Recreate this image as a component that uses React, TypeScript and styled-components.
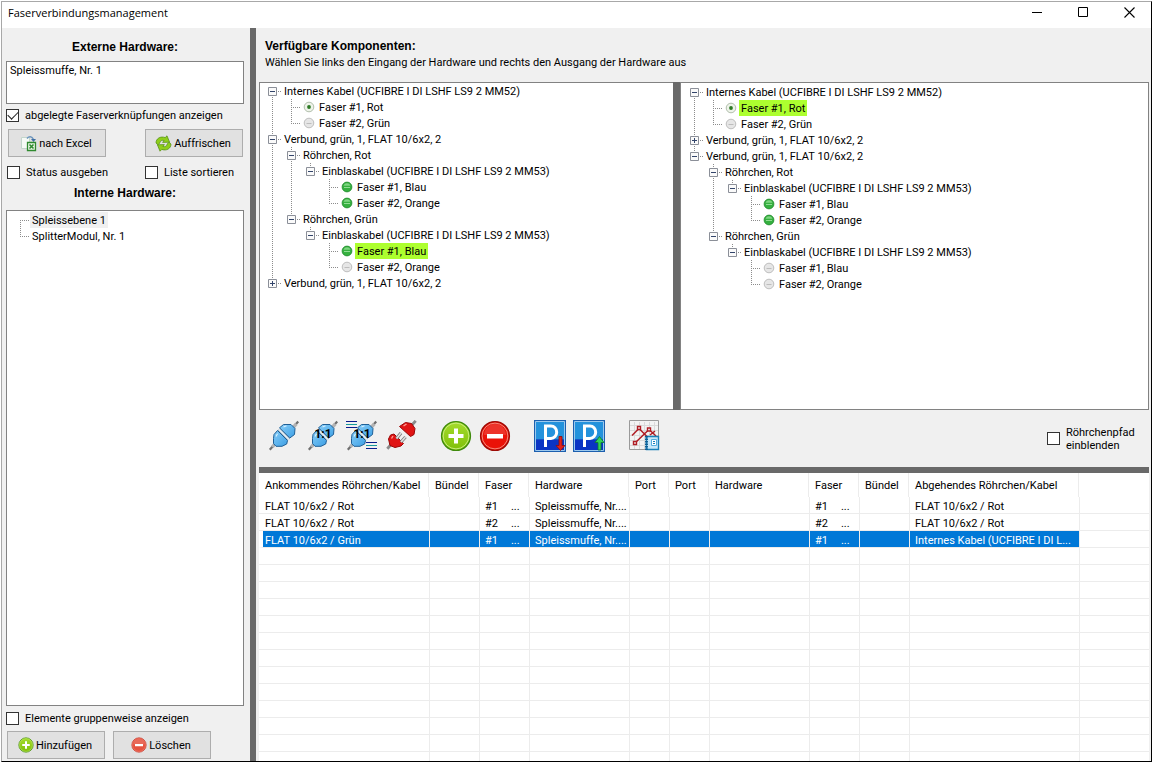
import React, { useState } from 'react';
import styled, { createGlobalStyle, css } from 'styled-components';

const colors = {
  face: '#f0f0f0',
  splitter: '#696969',
  edge: '#828282',
  grid: '#ececec',
  selection: '#0078d7',
  mark: '#adff2f',
};

const GlobalStyle = createGlobalStyle`
  * { box-sizing: border-box; }
  body {
    margin: 0;
    background: #fff;
    color: #000;
    font: 11px/16px Roboto, "Liberation Sans", Arial, sans-serif;
  }
  button { font: inherit; color: inherit; margin: 0; }
`;

const Frame = styled.div`
  height: 100vh;
  padding: 1px 0 1px 1px;
`;

const Window = styled.div`
  height: 100%;
  display: flex;
  flex-direction: column;
  border: 1px solid #a8a8a8;
  border-right-color: #000;
  border-bottom-color: #000;
`;

const TitleBar = styled.header`
  display: flex;
  justify-content: space-between;
  height: 26px;
  padding-left: 6px;
`;

const Title = styled.h1`
  margin: 0;
  font: 11px/22px "Open Sans", "Noto Sans", sans-serif;
`;

const WindowButtons = styled.div`
  display: flex;
  height: 20px;
`;

const WindowButton = styled.button`
  width: 46px;
  padding: 0 0 0 2px;
  border: 0;
  background: none;
  display: flex;
  align-items: center;
  justify-content: center;
`;

const Body = styled.div`
  flex: 1;
  min-height: 0;
  display: flex;
  background: ${colors.face};
`;

const Sidebar = styled.aside`
  width: 248px;
  flex: none;
  display: flex;
  flex-direction: column;
  padding: 11px 6px 2px 4px;
`;

const VerticalSplitter = styled.div`
  width: 6px;
  flex: none;
  background: ${colors.splitter};
`;

const HorizontalSplitter = styled.div`
  height: 6px;
  flex: none;
  background: ${colors.splitter};
`;

const SectionTitle = styled.h2`
  margin: 0;
  font: bold 12px/16px "Liberation Sans", Arial, sans-serif;
`;

const SideTitle = styled(SectionTitle)`
  text-align: center;
`;

const HardwareBox = styled.textarea`
  display: block;
  height: 43px;
  margin: 6px 0 4px;
  padding: 1px 3px;
  border: 1px solid ${colors.edge};
  border-radius: 0;
  background: #fff;
  color: #000;
  font: inherit;
  resize: none;
  outline: none;
  overflow: hidden;
`;

const CheckLabel = styled.label<{ $wrap?: boolean }>`
  display: flex;
  align-items: center;
  gap: 6px;
  min-height: 14px;
  line-height: 13px;
  white-space: ${(p) => (p.$wrap ? 'normal' : 'nowrap')};
`;

const CheckInput = styled.input`
  appearance: none;
  flex: none;
  width: 13px;
  height: 13px;
  margin: 0;
  border: 1px solid #333;
  background: #fff;
  display: grid;
  place-items: center;
  &:checked::before {
    content: '';
    width: 9px;
    height: 5px;
    border: solid #222;
    border-width: 0 0 1px 1px;
    transform: translateY(-1px) rotate(-45deg);
  }
`;

const TwoColumns = styled.div`
  display: grid;
  grid-template-columns: 98px 98px;
  justify-content: space-between;
`;

const PairedButtons = styled(TwoColumns)`
  margin: 7px 0 8px;
  padding: 0 1px 0 2px;
`;

const PairedChecks = styled(TwoColumns)`
  margin-bottom: 6px;
  padding: 0 1px;
`;

const BottomButtons = styled.div`
  display: flex;
  gap: 8px;
  margin-top: 6px;
  padding-left: 1px;
`;

const PushButton = styled.button`
  width: 98px;
  height: 28px;
  padding: 0 2px 0 0;
  border: 1px solid #adadad;
  background: #e1e1e1;
  display: flex;
  align-items: center;
  justify-content: center;
  gap: 2px;
  white-space: nowrap;
`;

const ButtonText = styled.span`
  padding-top: 2px;
`;

const InnerTree = styled.div`
  flex: 1;
  min-height: 0;
  margin: 9px 0 5px;
  padding: 1px 4px;
  border: 1px solid ${colors.edge};
  background: #fff;
  overflow: hidden;
`;

const Main = styled.main`
  flex: 1;
  min-width: 0;
  display: flex;
  flex-direction: column;
  padding: 0 2px 0 3px;
`;

const Intro = styled.div`
  padding: 10px 6px 12px;
`;

const IntroText = styled.p`
  margin: 0;
  padding-top: 1px;
  line-height: 15px;
`;

const Trees = styled.div`
  flex: 328 1 0;
  min-height: 0;
  display: grid;
  grid-template-columns: minmax(0, 414fr) 7px minmax(0, 469fr);
`;

const TreeSplitter = styled.div`
  background: ${colors.splitter};
`;

const TreePane = styled.div<{ $side: 'input' | 'output' }>`
  padding: ${(p) => (p.$side === 'input' ? '0 3px' : '1px 4px')};
  border: 1px solid ${colors.edge};
  border-right-width: ${(p) => (p.$side === 'input' ? '0' : '1px')};
  background: #fff;
  overflow: hidden;
`;

const TreeList = styled.ul`
  margin: 0;
  padding: 0;
  list-style: none;
`;

const TreeRow = styled.div`
  display: flex;
  height: 16px;
  align-items: center;
  white-space: nowrap;
`;

const TreeText = styled.span<{ $tone?: string }>`
  padding: 1px 2px 0;
  line-height: 15px;
  background: ${(p) => p.$tone ?? 'transparent'};
`;

const Cell = styled.svg`
  flex: none;
  display: block;
`;

const Expander = styled.button`
  flex: none;
  display: block;
  padding: 0;
  border: 0;
  background: none;
`;

const Dot = styled.svg`
  flex: none;
  display: block;
  margin: 0 2px;
`;

const Toolbar = styled.div`
  flex: none;
  height: 57px;
  display: flex;
  align-items: center;
  justify-content: space-between;
  padding: 0 16px 6px 9px;
`;

const ToolGroups = styled.div`
  display: flex;
  gap: 23px;
`;

const ToolGroup = styled.div`
  display: flex;
  gap: 7px;
`;

const ToolButton = styled.button`
  width: 32px;
  height: 32px;
  padding: 0;
  border: 0;
  background: none;
  svg { display: block; }
`;

const PathOption = styled.div`
  width: 86px;
  padding-top: 6px;
`;

const ListPane = styled.div`
  flex: 288 1 0;
  min-height: 0;
  background: #fff;
  overflow: hidden;
`;

const List = styled.table`
  width: 100%;
  table-layout: fixed;
  border-collapse: separate;
  border-spacing: 0;
`;

const HeadCell = styled.th`
  height: 24px;
  padding: 2px 6px 0;
  border-right: 1px solid ${colors.grid};
  text-align: left;
  font-weight: normal;
  white-space: nowrap;
  &:last-child { border-right: 0; }
`;

const ListCell = styled.td`
  height: 17px;
  padding: 3px 5px 0;
  border-left: 1px solid ${colors.grid};
  border-bottom: 1px solid ${colors.grid};
  line-height: 13px;
  white-space: nowrap;
  overflow: hidden;
  &:first-child { border-left: 0; padding-left: 6px; }
`;

const ListRow = styled.tr<{ $selected?: boolean }>`
  ${(p) =>
    p.$selected &&
    css`
      color: #fff;
      ${ListCell}:not(:last-child) {
        background: ${colors.selection};
        background-clip: padding-box;
      }
      ${ListCell}:first-child {
        border-left: 4px solid #fff;
        padding-left: 2px;
      }
    `}
`;

const Fiber = styled.span`
  display: flex;
  gap: 13px;
`;

/* ---------- icons ---------- */

const PlusBadge = ({ size }: { size: number }) => (
  <svg width={size} height={size} viewBox="0 0 32 32" aria-hidden="true">
    <defs>
      <linearGradient id="plusFill" x1="0" y1="0" x2="0" y2="1">
        <stop offset="0" stopColor="#a5dc2c" />
        <stop offset="1" stopColor="#7fbf08" />
      </linearGradient>
    </defs>
    <circle cx="16" cy="16" r="14.4" fill="url(#plusFill)" stroke="#3f8a0c" strokeWidth="1.4" />
    <circle cx="16" cy="16" r="12.9" fill="none" stroke="#c9ee7a" strokeWidth="1" />
    <path d="M14 8.500h4v5.500h5.500v4H18v5.500h-4V18H8.500v-4H14z" fill="#fff" />
  </svg>
);

const MinusBadge = ({ size, soft }: { size: number; soft?: boolean }) => (
  <svg width={size} height={size} viewBox="0 0 32 32" aria-hidden="true">
    <circle cx="16" cy="16" r="14.4" fill={soft ? '#e5523f' : '#ea1208'} stroke={soft ? '#c43a2c' : '#9c0a05'} strokeWidth="1.4" />
    <circle cx="16" cy="16" r="12.9" fill="none" stroke="#f58a7c" strokeWidth="1" />
    <path d="M5 15a11 11 0 0 1 22 0z" fill="#fff" opacity=".14" />
    <path d="M8 14h16v4.500H8z" fill="#fff" />
  </svg>
);

const ExcelIcon = () => (
  <svg width="17" height="17" viewBox="0 0 17 17" aria-hidden="true">
    <path d="M1.500 2.500h8v11h-8z" fill="#f6faf6" stroke="#c4d6cc" />
    <path d="M7 3.500c2-2.500 5-2.500 6.500 1" fill="none" stroke="#6f97bf" strokeWidth="1.500" />
    <path d="M11 4h5L13.500 7z" fill="#3f6fa3" />
    <path d="M7.500 7.500h8v8h-8z" fill="#e9f5e4" stroke="#2f8a2f" strokeWidth="1.300" />
    <path d="M9.500 9.500l4 4M13.500 9.500l-4 4" stroke="#2f8a2f" strokeWidth="1.600" />
  </svg>
);

const RefreshIcon = () => (
  <svg width="17" height="17" viewBox="0 0 17 17" aria-hidden="true">
    <g fill="#8fce1b" stroke="#4e8a10" strokeWidth=".7" strokeLinejoin="round">
      <path d="M1 8C1 3.500 5.500 .8 10.200 2.600L12 .8l2.600 6.400-7 .2 1.500-1.900C6.800 4.900 5 6 4.800 8L3 9.800z" />
      <path d="M16 9c0 4.500-4.500 7.200-9.200 5.400L5 16.200 2.400 9.800l7-.2-1.500 1.900c2.300.6 4.100-.5 4.300-2.500l1.800-1.800z" />
    </g>
  </svg>
);

const BluePlug = ({ ratio, lines }: { ratio?: boolean; lines?: boolean }) => (
  <svg width="32" height="32" viewBox="0 0 32 32" aria-hidden="true">
    <defs>
      <linearGradient id="plugFill" x1="0" y1="0" x2="1" y2="1">
        <stop offset="0" stopColor="#86cdf8" />
        <stop offset="1" stopColor="#3d9fe4" />
      </linearGradient>
    </defs>
    <path d="M1.800 29.700L7 23.800M25 7.500L30.200 1.500" stroke="#707070" strokeWidth="2.200" />
    <path d="M4.300 27L8 22.800M24 8.800L28.300 3.800" stroke="#b4b4b4" strokeWidth="3.400" />
    <path d="M10.500 9.500L21 19.500" stroke="#9fb4c2" strokeWidth="3" />
    <path d="M11 9.500L21 19.500" stroke="#eef4f8" strokeWidth="1.200" />
    <g fill="url(#plugFill)" stroke="#1f5f96" strokeWidth="1" strokeLinejoin="round">
      <path d="M5.500 18.500L6 14.500L9.500 10.500L19.500 20.500L18.700 24L14 26.300H8L5.500 23.500z" />
      <path d="M11.500 7.800L15.500 4.500H23L27 8.500L26.500 14.500L21.800 18z" />
    </g>
    <path d="M15.500 7l3-1.300M8 16.500l1.500-2.800" stroke="#d6effd" strokeWidth="1.200" />
    {lines && (
      <g strokeWidth="1">
        <path d="M0 1.500h11M0 7.500h11M20 22.500h11M20 28.500h11" stroke="#0a1c8c" />
        <path d="M0 4.500h11M20 25.500h11" stroke="#159a9a" />
      </g>
    )}
    {ratio && (
      <text x="16" y="18" textAnchor="middle" fontSize="12" fontWeight="bold" fontFamily="Roboto, sans-serif" fill="#000">
        1:1
      </text>
    )}
  </svg>
);

const RedPlug = () => (
  <svg width="32" height="32" viewBox="0 0 32 32" aria-hidden="true">
    <path d="M2.300 28.700L6.500 24M27 5L30.700 .8" stroke="#8a8a8a" strokeWidth="2.800" />
    <g fill="#e01414" stroke="#9a0606" strokeWidth="1" strokeLinejoin="round">
      <path d="M14.500 6.500L20.500 2.500L26.500 3.500L30 8.500L29 14.500L25.500 16.500z" />
      <path d="M3.500 19L5.500 15L9 14L18.500 23.500L16 26L10 27.500L5 25.500z" />
    </g>
    <path d="M11.500 18.500L16 13M16 22L20.500 17" stroke="#777" strokeWidth="3.200" />
    <path d="M11.500 18.500L16 13M16 22L20.500 17" stroke="#dedede" strokeWidth="1.800" />
    <path d="M18.500 6l3-2M6.500 18.500l1.500-2.500" stroke="#ff9a90" strokeWidth="1.400" />
  </svg>
);

const ParkIcon = ({ up }: { up?: boolean }) => (
  <svg width="32" height="32" viewBox="0 0 32 32" aria-hidden="true">
    <path d="M0 0h32v32H0z" fill="#1c5fae" />
    <path d="M1.500 1.500h29v18h-29z" fill="#2492dc" />
    <path d="M1.500 19.500h29v11h-29z" fill="#0a34c4" />
    <path d="M1.500 1.500h29v29h-29z" fill="none" stroke="#9cc9ee" strokeWidth="1" />
    <path d="M11.500 27V6h5.500a5.700 6.200 0 0 1 0 12.400h-5.500" fill="none" stroke="#fff" strokeWidth="3" />
    {up ? (
      <path d="M26.500 16.500l4.500 6h-3V30h-3v-7.500h-3z" fill="#2fd35a" stroke="#0d7a2c" strokeWidth=".8" />
    ) : (
      <path d="M26.500 30.500l-4.500-5h3V16.500h3v9h3z" fill="#e0201c" stroke="#8c0d0d" strokeWidth=".8" />
    )}
  </svg>
);

const ChartIcon = () => (
  <svg width="32" height="32" viewBox="0 0 32 32" aria-hidden="true">
    <path d="M1.500 .5h29v29h-29z" fill="#f3f3f3" stroke="#9a9a9a" />
    <path d="M6.500 2v27M11.500 2v27M16.500 2v27M21.500 2v27M26.500 2v27M2 5.500h28M2 10.500h28M2 15.500h28M2 20.500h28M2 25.500h28" stroke="#dadada" />
    <path d="M4 15.500L11 8.500L22 19.500M7 23L21 9.500L28 16M22 15L27 11" fill="none" stroke="#b01c24" strokeWidth="1.500" />
    <g fill="#f3f3f3" stroke="#b01c24" strokeWidth="1.400">
      <path d="M9.500 6.500h3v3h-3zM19.500 8h3v3h-3zM5.500 21.500h3v3h-3z" />
    </g>
    <path d="M18.500 16.500h12v13h-12z" fill="#c8e8fa" stroke="#1a80b8" strokeWidth="1.400" />
    <path d="M18.500 16v14" stroke="#0f5f94" strokeWidth="3" strokeDasharray="1.500 1" />
    <path d="M23.500 19.500h5v6h-5z" fill="#fff" stroke="#58aede" />
    <path d="M25 21.500h2M25 23.500h2" stroke="#1a80b8" />
  </svg>
);

type DotKind = 'green' | 'grey' | 'center';

const StatusDot = ({ kind }: { kind: DotKind }) => (
  <Dot width="12" height="12" viewBox="0 0 12 12" aria-hidden="true">
    {kind === 'green' && (
      <>
        <circle cx="6" cy="6" r="4.900" fill="#35b03f" stroke="#1e8a2b" strokeWidth=".8" />
        <path d="M2.500 4.800a3.600 3.200 0 0 1 7 0z" fill="#7fd582" />
        <path d="M3 6.500h6" stroke="#8fdc92" />
      </>
    )}
    {kind === 'grey' && (
      <>
        <circle cx="6" cy="6" r="4.800" fill="#e6e6e6" stroke="#b8b8b8" strokeWidth=".9" />
        <path d="M3.500 6.500h5" stroke="#bdbdbd" />
      </>
    )}
    {kind === 'center' && (
      <>
        <circle cx="6" cy="6" r="4.800" fill="#eef3ea" stroke="#a9b8a4" strokeWidth=".9" />
        <circle cx="6" cy="6" r="1.900" fill="#2d7a25" />
      </>
    )}
  </Dot>
);

/* ---------- tree ---------- */

type Node = {
  text: string;
  dot?: DotKind;
  tone?: string;
  closed?: boolean;
  children?: Node[];
};

const dotted = { stroke: '#8c8c8c', strokeWidth: 1, strokeDasharray: '1 1' };

const Guide = ({ line }: { line: boolean }) => (
  <Cell width="19" height="16" aria-hidden="true">
    {line && <path d="M9.500 0v16" {...dotted} />}
  </Cell>
);

const Joint = ({ top, bottom, box }: { top: boolean; bottom: boolean; box?: 'open' | 'closed' }) => (
  <Cell width="19" height="16" aria-hidden="true">
    {top && <path d="M9.500 0v8" {...dotted} />}
    {bottom && <path d="M9.500 8v8" {...dotted} />}
    <path d="M9 8.500h9" {...dotted} />
    {box && (
      <>
        <path d="M5.500 4.500h8v8h-8z" fill="#fafafa" stroke="#8b8f98" />
        <path d={box === 'open' ? 'M7 8.500h5' : 'M7 8.500h5M9.500 6v5'} stroke="#33456b" />
      </>
    )}
  </Cell>
);

type BranchProps = { node: Node; guides: boolean[]; first: boolean; last: boolean };

const Branch = ({ node, guides, first, last }: BranchProps) => {
  const [open, setOpen] = useState(!node.closed);
  const top = guides.length > 0 || !first;
  const expandable = Boolean(node.children);
  return (
    <li>
      <TreeRow>
        {guides.map((line, i) => (
          <Guide key={i} line={line} />
        ))}
        {expandable ? (
          <Expander type="button" aria-label={node.text} aria-expanded={open} onClick={() => setOpen(!open)}>
            <Joint top={top} bottom={!last} box={open ? 'open' : 'closed'} />
          </Expander>
        ) : (
          <Joint top={top} bottom={!last} />
        )}
        {node.dot && <StatusDot kind={node.dot} />}
        <TreeText $tone={node.tone}>{node.text}</TreeText>
      </TreeRow>
      {open && node.children && <Branches nodes={node.children} guides={[...guides, !last]} />}
    </li>
  );
};

const Branches = ({ nodes, guides = [] }: { nodes: Node[]; guides?: boolean[] }) => (
  <TreeList>
    {nodes.map((node, i) => (
      <Branch key={i} node={node} guides={guides} first={i === 0} last={i === nodes.length - 1} />
    ))}
  </TreeList>
);

const fibers = (blue: DotKind, orange: DotKind, tone?: string): Node[] => [
  {
    text: 'Einblaskabel (UCFIBRE I DI LSHF LS9 2 MM53)',
    children: [
      { text: 'Faser #1, Blau', dot: blue, tone },
      { text: 'Faser #2, Orange', dot: orange },
    ],
  },
];

const internalCable = (tone?: string): Node => ({
  text: 'Internes Kabel (UCFIBRE I DI LSHF LS9 2 MM52)',
  children: [
    { text: 'Faser #1, Rot', dot: 'center', tone },
    { text: 'Faser #2, Grün', dot: 'grey' },
  ],
});

const bundleName = 'Verbund, grün, 1, FLAT 10/6x2, 2';

const inputTree: Node[] = [
  internalCable(),
  {
    text: bundleName,
    children: [
      { text: 'Röhrchen, Rot', children: fibers('green', 'green') },
      { text: 'Röhrchen, Grün', children: fibers('green', 'grey', colors.mark) },
    ],
  },
  { text: bundleName, closed: true, children: [] },
];

const outputTree: Node[] = [
  internalCable(colors.mark),
  { text: bundleName, closed: true, children: [] },
  {
    text: bundleName,
    children: [
      { text: 'Röhrchen, Rot', children: fibers('green', 'green') },
      { text: 'Röhrchen, Grün', children: fibers('grey', 'grey') },
    ],
  },
];

const innerHardware: Node[] = [{ text: 'Spleissebene 1', tone: colors.face }, { text: 'SplitterModul, Nr. 1' }];

/* ---------- connection list ---------- */

const columns = [
  { title: 'Ankommendes Röhrchen/Kabel', width: 170 },
  { title: 'Bündel', width: 50 },
  { title: 'Faser', width: 50 },
  { title: 'Hardware', width: 100 },
  { title: 'Port', width: 40 },
  { title: 'Port', width: 40 },
  { title: 'Hardware', width: 100 },
  { title: 'Faser', width: 50 },
  { title: 'Bündel', width: 50 },
  { title: 'Abgehendes Röhrchen/Kabel', width: 170 },
];

const connections = [
  ['FLAT 10/6x2 / Rot', '', '#1', 'Spleissmuffe, Nr....', '', '', '', '#1', '', 'FLAT 10/6x2 / Rot'],
  ['FLAT 10/6x2 / Rot', '', '#2', 'Spleissmuffe, Nr....', '', '', '', '#2', '', 'FLAT 10/6x2 / Rot'],
  ['FLAT 10/6x2 / Grün', '', '#1', 'Spleissmuffe, Nr....', '', '', '', '#1', '', 'Internes Kabel (UCFIBRE I DI L...'],
];

const emptyRows = Array.from({ length: 13 }, (_, i) => i);

const Check = ({ label, checked, wrap }: { label: string; checked?: boolean; wrap?: boolean }) => (
  <CheckLabel $wrap={wrap}>
    <CheckInput type="checkbox" defaultChecked={checked} />
    <span>{label}</span>
  </CheckLabel>
);

const Tool = ({ label, children }: { label: string; children: React.ReactNode }) => (
  <ToolButton type="button" aria-label={label}>
    {children}
  </ToolButton>
);

export default function App() {
  return (
    <Frame>
      <GlobalStyle />
      <Window>
        <TitleBar>
          <Title>Faserverbindungsmanagement</Title>
          <WindowButtons>
            <WindowButton type="button" aria-label="Minimieren">
              <svg width="11" height="11"><path d="M0 5.500h10" stroke="#000" /></svg>
            </WindowButton>
            <WindowButton type="button" aria-label="Maximieren">
              <svg width="11" height="11"><path d="M.5 .5h9v9h-9z" fill="none" stroke="#000" /></svg>
            </WindowButton>
            <WindowButton type="button" aria-label="Schließen">
              <svg width="11" height="11"><path d="M.5 .5l10 10M10.500 .5l-10 10" stroke="#000" strokeWidth="1.100" /></svg>
            </WindowButton>
          </WindowButtons>
        </TitleBar>
        <Body>
          <Sidebar>
            <SideTitle as="label" htmlFor="hardware">Externe Hardware:</SideTitle>
            <HardwareBox id="hardware" defaultValue="Spleissmuffe, Nr. 1" />
            <Check label="abgelegte Faserverknüpfungen anzeigen" checked />
            <PairedButtons>
              <PushButton type="button"><ExcelIcon /><ButtonText>nach Excel</ButtonText></PushButton>
              <PushButton type="button"><RefreshIcon /><ButtonText>Auffrischen</ButtonText></PushButton>
            </PairedButtons>
            <PairedChecks>
              <Check label="Status ausgeben" />
              <Check label="Liste sortieren" />
            </PairedChecks>
            <SideTitle>Interne Hardware:</SideTitle>
            <InnerTree>
              <Branches nodes={innerHardware} />
            </InnerTree>
            <Check label="Elemente gruppenweise anzeigen" />
            <BottomButtons>
              <PushButton type="button"><PlusBadge size={16} /><ButtonText>Hinzufügen</ButtonText></PushButton>
              <PushButton type="button"><MinusBadge size={16} soft /><ButtonText>Löschen</ButtonText></PushButton>
            </BottomButtons>
          </Sidebar>
          <VerticalSplitter />
          <Main>
            <Intro>
              <SectionTitle>Verfügbare Komponenten:</SectionTitle>
              <IntroText>Wählen Sie links den Eingang der Hardware und rechts den Ausgang der Hardware aus</IntroText>
            </Intro>
            <Trees>
              <TreePane $side="input"><Branches nodes={inputTree} /></TreePane>
              <TreeSplitter />
              <TreePane $side="output"><Branches nodes={outputTree} /></TreePane>
            </Trees>
            <Toolbar>
              <ToolGroups>
                <ToolGroup>
                  <Tool label="Verbinden"><BluePlug /></Tool>
                  <Tool label="1:1 verbinden"><BluePlug ratio /></Tool>
                  <Tool label="Alle 1:1 verbinden"><BluePlug ratio lines /></Tool>
                  <Tool label="Trennen"><RedPlug /></Tool>
                </ToolGroup>
                <ToolGroup>
                  <Tool label="Hinzufügen"><PlusBadge size={32} /></Tool>
                  <Tool label="Entfernen"><MinusBadge size={32} /></Tool>
                </ToolGroup>
                <ToolGroup>
                  <Tool label="Parken"><ParkIcon /></Tool>
                  <Tool label="Ausparken"><ParkIcon up /></Tool>
                </ToolGroup>
                <ToolGroup>
                  <Tool label="Diagramm"><ChartIcon /></Tool>
                </ToolGroup>
              </ToolGroups>
              <PathOption>
                <Check label="Röhrchenpfad einblenden" wrap />
              </PathOption>
            </Toolbar>
            <HorizontalSplitter />
            <ListPane>
              <List>
                <colgroup>
                  {columns.map((c, i) => (
                    <col key={i} width={c.width} />
                  ))}
                  <col />
                </colgroup>
                <thead>
                  <tr>
                    {columns.map((c, i) => (
                      <HeadCell key={i}>{c.title}</HeadCell>
                    ))}
                    <HeadCell />
                  </tr>
                </thead>
                <tbody>
                  {connections.map((row, r) => (
                    <ListRow key={r} $selected={r === 2}>
                      {row.map((value, c) => (
                        <ListCell key={c}>
                          {value.startsWith('#') ? (
                            <Fiber><span>{value}</span><span>...</span></Fiber>
                          ) : (
                            value
                          )}
                        </ListCell>
                      ))}
                      <ListCell />
                    </ListRow>
                  ))}
                  {emptyRows.map((r) => (
                    <ListRow key={r}>
                      {columns.map((_, c) => (
                        <ListCell key={c} />
                      ))}
                      <ListCell />
                    </ListRow>
                  ))}
                </tbody>
              </List>
            </ListPane>
          </Main>
        </Body>
      </Window>
    </Frame>
  );
}
